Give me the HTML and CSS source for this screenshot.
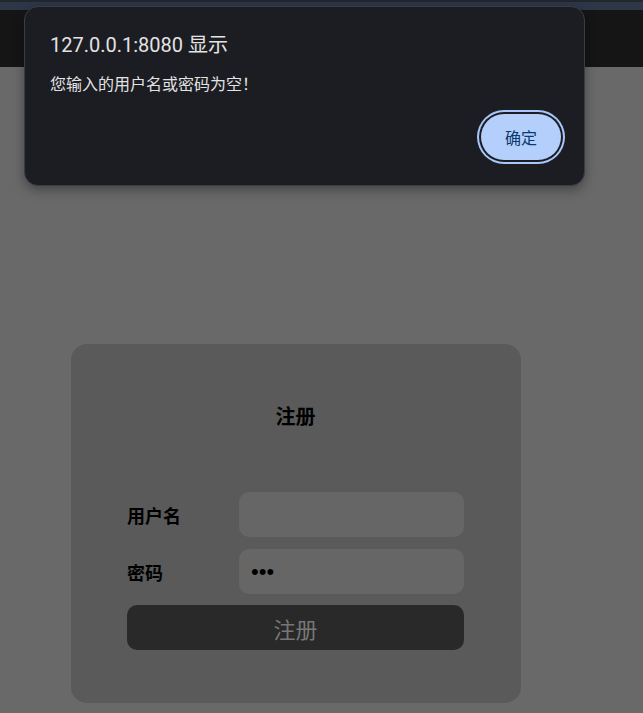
FILE: index.html
```html
<!DOCTYPE html>
<html lang="zh-CN">
<head>
    <meta charset="UTF-8">
    <meta name="viewport" content="width=device-width, initial-scale=1.0">
    <title>注册</title>
    <link rel="stylesheet" href="styles.css">
</head>
<body>
    <div class="browser-strip"></div>
    <header class="page-header"></header>
    <main class="page-main">
        <section class="register-card">
            <h2 class="register-title">注册</h2>
            <form class="register-form">
                <div class="form-row">
                    <label class="form-label" for="username">用户名</label>
                    <input id="username" class="form-input" type="text">
                </div>
                <div class="form-row">
                    <label class="form-label" for="password">密码</label>
                    <input id="password" class="form-input" type="password" value="123">
                </div>
                <button type="button" class="register-button">注册</button>
            </form>
        </section>
    </main>

    <div class="alert-dialog">
        <div class="alert-title">127.0.0.1:8080 显示</div>
        <div class="alert-message">您输入的用户名或密码为空！</div>
        <div class="alert-actions">
            <button type="button" class="alert-button">确定</button>
        </div>
    </div>
</body>
</html>
```

FILE: styles.css
```css
:root {
    --page-bg: #696969;
    --card-bg: #5a5a5a;
    --input-bg: #666666;
    --dialog-bg: #1b1d22;
    --accent: #a8c7fa;
}

* {
    box-sizing: border-box;
}

body {
    margin: 0;
    background-color: var(--page-bg);
    font-family: Roboto, "Noto Sans CJK SC", sans-serif;
    min-height: 713px;
}

.browser-strip {
    height: 10px;
    background-color: #2e3748;
    border-top: 2px solid #22262e;
}

.page-header {
    height: 57px;
    background-color: #151515;
}

.page-main {
    padding-top: 277px;
    padding-left: 71px;
}

.register-card {
    width: 450px;
    padding: 59px 57px 53px 56px;
    background-color: var(--card-bg);
    border-radius: 16px;
}

.register-title {
    margin: 0 0 61px;
    text-align: center;
    font-size: 20px;
    line-height: 28px;
    font-weight: 700;
    color: #000;
}

.register-form {
    display: flex;
    flex-direction: column;
    gap: 12px;
}

.form-row {
    display: flex;
    align-items: center;
}

.form-label {
    width: 112px;
    font-size: 18px;
    font-weight: 700;
    color: #000;
}

.form-input {
    width: 225px;
    height: 45px;
    border: none;
    outline: none;
    border-radius: 10px;
    background-color: var(--input-bg);
    padding: 0 12px;
    font-size: 22px;
    color: #000;
}

.register-button {
    height: 45px;
    margin-top: -1px;
    border: none;
    border-radius: 10px;
    background-color: #292929;
    color: #777777;
    font-family: inherit;
    font-size: 22px;
}

.alert-dialog {
    position: absolute;
    left: 24px;
    top: 6px;
    width: 561px;
    height: 180px;
    padding: 23px 23px 0 25px;
    background-color: var(--dialog-bg);
    border: 1px solid #3a3d44;
    border-radius: 14px;
    box-shadow: 0 4px 12px rgba(0, 0, 0, 0.35);
    color: #e3e3e3;
}

.alert-title {
    font-size: 20px;
    line-height: 30px;
}

.alert-message {
    margin-top: 14px;
    font-size: 16px;
    line-height: 22px;
}

.alert-actions {
    display: flex;
    justify-content: flex-end;
    margin-top: 18px;
}

.alert-button {
    width: 80px;
    height: 46px;
    border: none;
    border-radius: 23px;
    background-color: #b4cffb;
    box-shadow: 0 0 0 2px #1b1d22, 0 0 0 4px var(--accent);
    color: #0b3a70;
    font-family: inherit;
    font-size: 16px;
}
```
